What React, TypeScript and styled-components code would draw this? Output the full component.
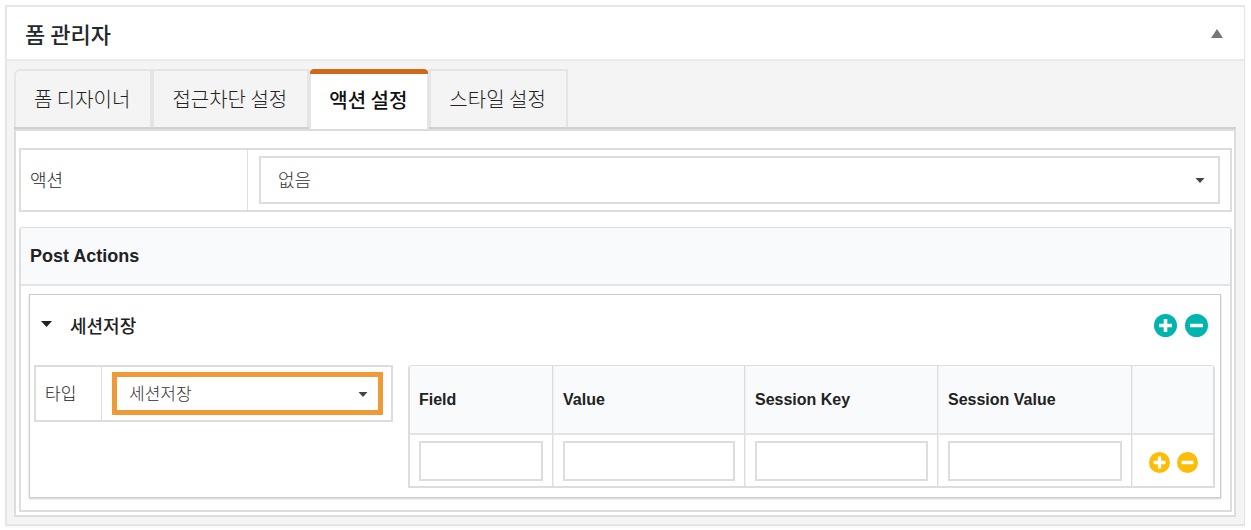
import React, { useState } from "react";
import styled, { createGlobalStyle, css } from "styled-components";

const GlobalStyle = createGlobalStyle`
  *, *::before, *::after { box-sizing: border-box; }
  body {
    margin: 0;
    background: #fff;
    color: #222;
    font-family: "Liberation Sans", "Noto Sans CJK KR", sans-serif;
    font-size: 18px;
  }
  button, input, select { font: inherit; color: inherit; }
`;

const korean = css`
  font-family: "Noto Sans CJK KR", sans-serif;
`;

const Panel = styled.section`
  margin: 5px 6px 4px 5px;
  border: 2px solid #e5e5e5;
  border-right-width: 1px;
  background: #f4f4f4;
  box-shadow: 0 1px 2px rgba(0, 0, 0, 0.05);
`;

const PanelHeader = styled.header`
  display: flex;
  align-items: center;
  justify-content: space-between;
  height: 54px;
  padding: 0 21px 0 18px;
  background: #fff;
  border-bottom: 2px solid #ebebeb;
`;

const PanelTitle = styled.h1`
  ${korean}
  margin: 0;
  font-size: 22px;
  line-height: 32px;
  font-weight: 500;
  color: #23282d;
`;

const IconButton = styled.button`
  display: flex;
  padding: 0;
  border: 0;
  background: none;
  cursor: pointer;
`;

const PanelBody = styled.div`
  padding: 8px 8px 7px 7px;
`;

const TabList = styled.div`
  display: flex;
  height: 60px;
  box-shadow: inset 0 -2px 0 #d0d0d0;
`;

const Tab = styled.button<{ $active: boolean }>`
  ${korean}
  height: 58px;
  padding: 0 20px 2px 18px;
  border: 2px solid #e5e5e5;
  border-bottom: 0;
  background: #f4f4f4;
  font-size: 20px;
  font-weight: 300;
  color: #222;
  white-space: nowrap;
  cursor: pointer;

  &:first-child {
    border-top-left-radius: 6px;
  }

  ${({ $active }) =>
    $active &&
    css`
      position: relative;
      height: 60px;
      border-top-color: transparent;
      background: #fff;
      font-weight: 500;
      color: #111;

      &::before {
        content: "";
        position: absolute;
        top: -2px;
        left: -1px;
        right: -1px;
        height: 5px;
        border-radius: 4px 4px 0 0;
        background: #d2691a;
      }
    `}
`;

const TabPanel = styled.div`
  padding: 17px 2px 3px 3px;
  border: 2px solid #ddd;
  background: #fff;
`;

const FieldRow = styled.div<{ $compact?: boolean }>`
  display: grid;
  grid-template-columns: ${({ $compact }) => ($compact ? "66px 1fr" : "227px 1fr")};
  border: 2px solid #ddd;
  background: #fff;
`;

const FieldLabel = styled.label<{ $compact?: boolean }>`
  ${korean}
  display: flex;
  align-items: center;
  padding: 0 0 2px 9px;
  border-right: 1px solid #e0e0e0;
  font-size: ${({ $compact }) => ($compact ? "17px" : "18px")};
  line-height: 24px;
  font-weight: 300;
`;

const FieldControl = styled.div<{ $compact?: boolean }>`
  display: grid;
  padding: ${({ $compact }) => ($compact ? "5px 8px 5px 10px" : "6px 10px 6px 11px")};
`;

const SelectWrap = styled.span`
  position: relative;
  display: grid;
`;

const Select = styled.select<{ $highlight?: boolean }>`
  ${korean}
  appearance: none;
  width: 100%;
  height: ${({ $highlight }) => ($highlight ? "43px" : "48px")};
  padding: ${({ $highlight }) => ($highlight ? "0 28px 2px 12px" : "0 34px 2px 17px")};
  border: ${({ $highlight }) => ($highlight ? "5px solid #f09937" : "2px solid #ddd")};
  border-radius: 0;
  background: #fff;
  font-size: ${({ $highlight }) => ($highlight ? "17px" : "18px")};
  font-weight: 300;
  color: #333;
`;

const SelectArrow = styled.svg`
  position: absolute;
  top: calc(50% - 2px);
  right: 15px;
  pointer-events: none;
`;

const Group = styled.section`
  margin-top: 15px;
  border: 2px solid #ddd;
  border-top-width: 1px;
  border-radius: 4px 4px 0 0;
`;

const GroupTitle = styled.h2`
  margin: 0;
  padding: 0 9px;
  border-bottom: 2px solid #e4e4e4;
  background: #f9fafc;
  font-size: 18px;
  line-height: 56px;
  font-weight: 700;
`;

const GroupBody = styled.div`
  padding: 8px 9px 12px 8px;
`;

const ActionCard = styled.article`
  border: 1px solid #ccc;
  padding: 0 5px 9px 4px;
  box-shadow: 0 1px 2px rgba(0, 0, 0, 0.2);
`;

const ActionHeader = styled.header`
  display: flex;
  align-items: center;
  height: 60px;
  margin-bottom: 10px;
  padding: 0 7px;
`;

const ActionTitle = styled.h3`
  ${korean}
  flex: 1;
  margin: 0 0 0 18px;
  font-size: 18px;
  line-height: 26px;
  font-weight: 500;
`;

const ButtonPair = styled.div<{ $gap: number }>`
  display: flex;
  gap: ${({ $gap }) => $gap}px;
`;

const ActionBody = styled.div`
  display: grid;
  grid-template-columns: 359fr 807fr;
  gap: 15px;
  align-items: start;
`;

const MappingTable = styled.table`
  width: 100%;
  table-layout: fixed;
  border-collapse: separate;
  border-spacing: 0;
  border: 2px solid #ddd;
  border-top-width: 1px;
  border-radius: 4px 4px 0 0;
`;

const HeadCell = styled.th`
  height: 69px;
  padding: 0 9px;
  border-right: 1px solid #ddd;
  border-bottom: 2px solid #e3e3e3;
  background: #f9fafc;
  font-size: 16px;
  font-weight: 700;
  text-align: left;

  & + & {
    border-left: 1px solid #f0f0f0;
  }

  &:last-child {
    border-right: 0;
  }
`;

const Cell = styled.td`
  height: 51px;
  padding: 0 9px;
  border-right: 1px solid #ddd;

  & + & {
    border-left: 1px solid #f0f0f0;
  }

  &:last-child {
    padding: 3px 0 0 16px;
    border-right: 0;
  }
`;

const TextInput = styled.input`
  display: block;
  width: 100%;
  height: 40px;
  padding: 0 8px;
  border: 2px solid #ddd;
  border-radius: 0;
  background: #fff;
  font-size: 16px;
`;

const RoundIcon = ({ kind, size, color }: { kind: "plus" | "minus"; size: number; color: string }) => (
  <svg width={size} height={size} viewBox="0 0 23 23" aria-hidden="true">
    <circle cx="11.5" cy="11.5" r="11.5" fill={color} />
    <rect x="5" y="9.7" width="13" height="3.6" rx="0.6" fill="#fff" />
    {kind === "plus" && <rect x="9.7" y="5" width="3.6" height="13" rx="0.6" fill="#fff" />}
  </svg>
);

const AddRemove = ({ size, color, gap }: { size: number; color: string; gap: number }) => (
  <ButtonPair $gap={gap}>
    <IconButton type="button" aria-label="추가">
      <RoundIcon kind="plus" size={size} color={color} />
    </IconButton>
    <IconButton type="button" aria-label="삭제">
      <RoundIcon kind="minus" size={size} color={color} />
    </IconButton>
  </ButtonPair>
);

const Dropdown = ({ id, option, highlight }: { id: string; option: string; highlight?: boolean }) => (
  <SelectWrap>
    <Select id={id} $highlight={highlight}>
      <option>{option}</option>
    </Select>
    <SelectArrow width="10" height="5" viewBox="0 0 10 5" aria-hidden="true">
      <path d="M0.5 0h9L5 5z" fill="#444" />
    </SelectArrow>
  </SelectWrap>
);

const tabs = ["폼 디자이너", "접근차단 설정", "액션 설정", "스타일 설정"];

const columns = [
  { label: "Field", width: 143 },
  { label: "Value", width: 192 },
  { label: "Session Key", width: 193 },
  { label: "Session Value", width: 194 },
];

const tableWidth = 803;

export default function App() {
  const [active, setActive] = useState(2);

  return (
    <>
      <GlobalStyle />
      <Panel>
        <PanelHeader>
          <PanelTitle>폼 관리자</PanelTitle>
          <IconButton type="button" aria-label="접기">
            <svg width="12" height="10" viewBox="0 0 12 10" aria-hidden="true">
              <path d="M6 1l6 9H0z" fill="#72777c" />
            </svg>
          </IconButton>
        </PanelHeader>
        <PanelBody>
          <TabList role="tablist">
            {tabs.map((label, index) => (
              <Tab
                key={label}
                type="button"
                role="tab"
                aria-selected={index === active}
                $active={index === active}
                onClick={() => setActive(index)}
              >
                {label}
              </Tab>
            ))}
          </TabList>
          <TabPanel role="tabpanel">
            <FieldRow>
              <FieldLabel htmlFor="action">액션</FieldLabel>
              <FieldControl>
                <Dropdown id="action" option="없음" />
              </FieldControl>
            </FieldRow>
            <Group>
              <GroupTitle>Post Actions</GroupTitle>
              <GroupBody>
                <ActionCard>
                  <ActionHeader>
                    <IconButton type="button" aria-label="세션저장 접기">
                      <svg width="11" height="10" viewBox="0 0 11 10" aria-hidden="true">
                        <path d="M0 1h11L5.5 7z" fill="#222" />
                      </svg>
                    </IconButton>
                    <ActionTitle>세션저장</ActionTitle>
                    <AddRemove size={23} color="#00b5ad" gap={8} />
                  </ActionHeader>
                  <ActionBody>
                    <FieldRow $compact>
                      <FieldLabel $compact htmlFor="type">타입</FieldLabel>
                      <FieldControl $compact>
                        <Dropdown id="type" option="세션저장" highlight />
                      </FieldControl>
                    </FieldRow>
                    <MappingTable>
                      <colgroup>
                        {columns.map(({ label, width }) => (
                          <col key={label} style={{ width: `${(width / tableWidth) * 100}%` }} />
                        ))}
                        <col />
                      </colgroup>
                      <thead>
                        <tr>
                          {columns.map(({ label }) => (
                            <HeadCell key={label} scope="col">{label}</HeadCell>
                          ))}
                          <HeadCell as="td" />
                        </tr>
                      </thead>
                      <tbody>
                        <tr>
                          {columns.map(({ label }) => (
                            <Cell key={label}>
                              <TextInput type="text" aria-label={label} />
                            </Cell>
                          ))}
                          <Cell>
                            <AddRemove size={21} color="#fbbd08" gap={7} />
                          </Cell>
                        </tr>
                      </tbody>
                    </MappingTable>
                  </ActionBody>
                </ActionCard>
              </GroupBody>
            </Group>
          </TabPanel>
        </PanelBody>
      </Panel>
    </>
  );
}
